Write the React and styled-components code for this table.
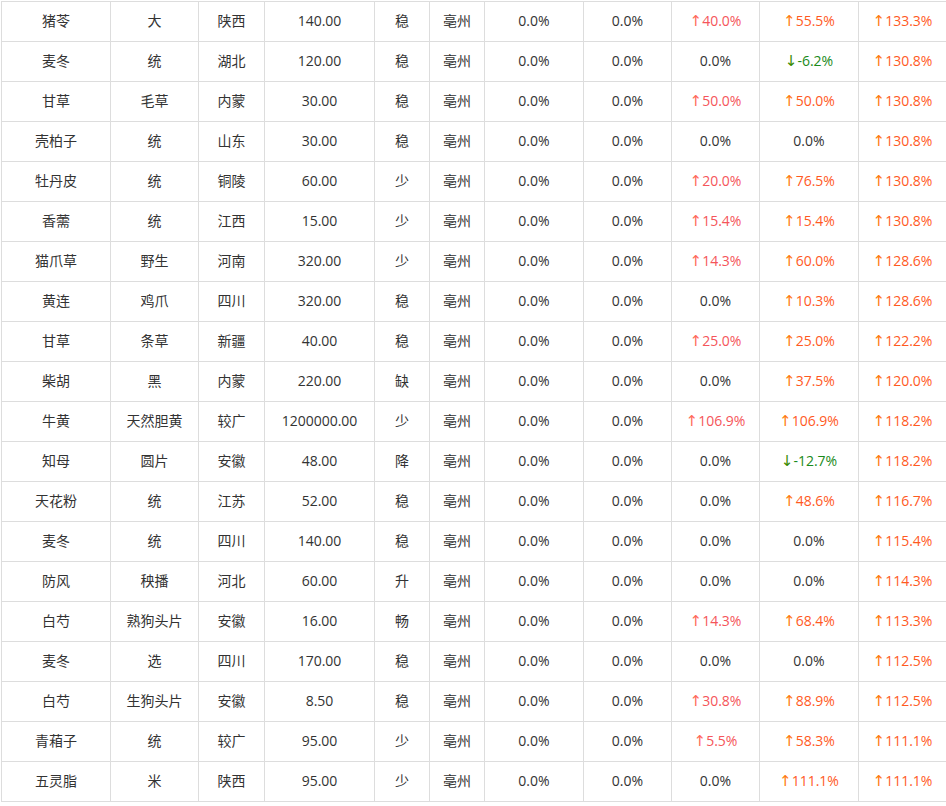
import React from "react";
import styled, { createGlobalStyle } from "styled-components";

const Global = createGlobalStyle`
  html, body {
    margin: 0;
    padding: 0;
    background: #fff;
    overflow: hidden;
  }
  body {
    font-family: "Open Sans", "Noto Sans CJK SC", sans-serif;
  }
`;

const Page = styled.div`
  width: 946px;
  height: 806px;
  overflow: hidden;
  padding: 1px 0 0 1px;
  box-sizing: border-box;
  background: #fff;
`;

const Table = styled.div`
  display: grid;
  grid-template-columns: 109px 88px 66px 110px 55px 55px 99px 88px 88px 99px 88px;
  grid-auto-rows: 40px;
  width: max-content;
  border-top: 1px solid #dddddd;
  border-left: 1px solid #dddddd;
`;

const Cell = styled.div`
  box-sizing: border-box;
  display: flex;
  align-items: center;
  justify-content: center;
  border-right: 1px solid #dddddd;
  border-bottom: 1px solid #dddddd;
  font-size: 14px;
  line-height: 20px;
  color: ${(p) => p.$color || "#333333"};
  white-space: nowrap;
  font-family: "Open Sans", "Noto Sans CJK SC", sans-serif;
  padding-bottom: 1px;
`;

const Arrow = styled.span`
  font-family: "DejaVu Sans", "Liberation Sans", sans-serif;
  font-size: 15px;
  line-height: 20px;
  margin-right: 0px;
  color: ${(p) => p.$color};
`;

const rows = [
  ["猪苓", "大", "陕西", "140.00", "稳", "40.0", "55.5", "133.3"],
  ["麦冬", "统", "湖北", "120.00", "稳", "0", "-6.2", "130.8"],
  ["甘草", "毛草", "内蒙", "30.00", "稳", "50.0", "50.0", "130.8"],
  ["壳柏子", "统", "山东", "30.00", "稳", "0", "0", "130.8"],
  ["牡丹皮", "统", "铜陵", "60.00", "少", "20.0", "76.5", "130.8"],
  ["香薷", "统", "江西", "15.00", "少", "15.4", "15.4", "130.8"],
  ["猫爪草", "野生", "河南", "320.00", "少", "14.3", "60.0", "128.6"],
  ["黄连", "鸡爪", "四川", "320.00", "稳", "0", "10.3", "128.6"],
  ["甘草", "条草", "新疆", "40.00", "稳", "25.0", "25.0", "122.2"],
  ["柴胡", "黑", "内蒙", "220.00", "缺", "0", "37.5", "120.0"],
  ["牛黄", "天然胆黄", "较广", "1200000.00", "少", "106.9", "106.9", "118.2"],
  ["知母", "圆片", "安徽", "48.00", "降", "0", "-12.7", "118.2"],
  ["天花粉", "统", "江苏", "52.00", "稳", "0", "48.6", "116.7"],
  ["麦冬", "统", "四川", "140.00", "稳", "0", "0", "115.4"],
  ["防风", "秧播", "河北", "60.00", "升", "0", "0", "114.3"],
  ["白芍", "熟狗头片", "安徽", "16.00", "畅", "14.3", "68.4", "113.3"],
  ["麦冬", "选", "四川", "170.00", "稳", "0", "0", "112.5"],
  ["白芍", "生狗头片", "安徽", "8.50", "稳", "30.8", "88.9", "112.5"],
  ["青葙子", "统", "较广", "95.00", "少", "5.5", "58.3", "111.1"],
  ["五灵脂", "米", "陕西", "95.00", "少", "0", "111.1", "111.1"],
];

const UP_COLORS = ["#f5555a", "#ff5a1f", "#ff5a1f"];
const UP_ARROW_COLORS = ["#ff6a5a", "#ff7a10", "#ff7a10"];
const DOWN_COLOR = "#1a8a1a";

function Change({ value, idx }) {
  if (value === "0") return <Cell>0.0%</Cell>;
  if (value.startsWith("-")) {
    return (
      <Cell $color={DOWN_COLOR}>
        <Arrow $color="#3a8a00">↓</Arrow>
        {value}%
      </Cell>
    );
  }
  return (
    <Cell $color={UP_COLORS[idx]}>
      <Arrow $color={UP_ARROW_COLORS[idx]}>↑</Arrow>
      {value}%
    </Cell>
  );
}

export default function App() {
  return (
    <Page>
      <Global />
      <Table>
        {rows.map((r, i) => (
          <React.Fragment key={i}>
            <Cell>{r[0]}</Cell>
            <Cell>{r[1]}</Cell>
            <Cell>{r[2]}</Cell>
            <Cell>{r[3]}</Cell>
            <Cell>{r[4]}</Cell>
            <Cell>亳州</Cell>
            <Cell>0.0%</Cell>
            <Cell>0.0%</Cell>
            <Change value={r[5]} idx={0} />
            <Change value={r[6]} idx={1} />
            <Change value={r[7]} idx={2} />
          </React.Fragment>
        ))}
      </Table>
    </Page>
  );
}
